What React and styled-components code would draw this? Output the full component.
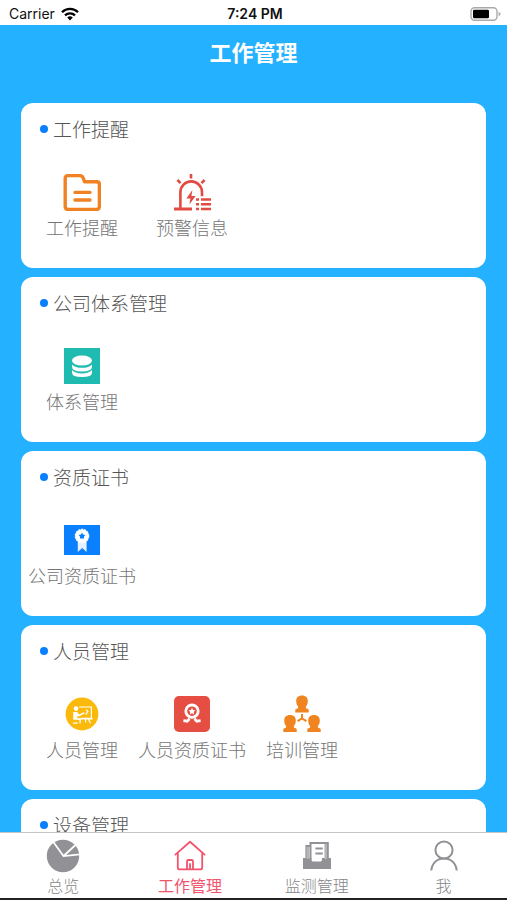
import styled, { createGlobalStyle } from "styled-components";

const GlobalStyle = createGlobalStyle`
  * { box-sizing: border-box; }
  body {
    margin: 0;
    font-family: "Noto Sans CJK SC", "Liberation Sans", sans-serif;
    background: #24b1ff;
  }
`;

const Screen = styled.div`
  height: 100vh;
  display: flex;
  flex-direction: column;
  background: #24b1ff;
`;

const StatusBar = styled.div`
  flex: none;
  height: 25px;
  padding: 2px 6px 0 9px;
  display: grid;
  grid-template-columns: 1fr auto 1fr;
  align-items: center;
  background: #fff;
  color: #111;
  font-family: Inter, sans-serif;
  font-size: 14px;
  line-height: 20px;
`;

const Carrier = styled.div`
  display: flex;
  align-items: center;
  gap: 6px;
`;

const Time = styled.time`
  font-weight: 600;
`;

const Battery = styled.svg`
  justify-self: end;
`;

const Header = styled.header`
  flex: none;
  height: 52px;
  text-align: center;
`;

const Title = styled.h1`
  margin: 0;
  color: #fff;
  font-size: 22px;
  font-weight: 700;
  line-height: 52px;
`;

const Content = styled.main`
  flex: 1;
  min-height: 0;
  overflow: hidden;
  padding: 26px 21px 0;
  display: flex;
  flex-direction: column;
  gap: 9px;
`;

const Card = styled.section`
  flex: none;
  min-height: 165px;
  padding: 12px 6px;
  border-radius: 12px;
  background: #fff;
`;

const CardTitle = styled.h2`
  margin: 0;
  padding-left: 13px;
  display: flex;
  align-items: center;
  gap: 5px;
  color: #555;
  font-size: 19px;
  font-weight: 300;
  line-height: 28px;

  &::before {
    content: "";
    width: 8px;
    height: 8px;
    border-radius: 50%;
    background: #0a80ff;
  }
`;

const Items = styled.div`
  margin-top: 30px;
  display: flex;
`;

const Item = styled.button`
  width: 110px;
  padding: 0;
  border: 0;
  background: none;
  display: flex;
  flex-direction: column;
  align-items: center;
  gap: 3px;
  color: #757575;
  font-family: inherit;
  font-size: 18px;
  font-weight: 300;
  line-height: 26px;
  white-space: nowrap;
  cursor: pointer;
`;

const TabBar = styled.nav`
  flex: none;
  display: flex;
  border-top: 1px solid #c4c4c4;
  border-bottom: 2px solid #222;
  background: #fff;
`;

const Tab = styled.a`
  flex: 1;
  padding: 6px 0 1px;
  display: flex;
  flex-direction: column;
  align-items: center;
  gap: 1px;
  color: ${({ $active }) => ($active ? "#f2536d" : "#858589")};
  font-size: 16px;
  font-weight: ${({ $active }) => ($active ? 400 : 300)};
  line-height: 23px;
  text-decoration: none;
`;

const WifiIcon = () => (
  <svg width="18" height="14" viewBox="0 0 18 14" fill="none" stroke="#000" strokeWidth="2.3" aria-hidden="true">
    <path d="M1 5.2a11.4 11.4 0 0 1 16 0" />
    <path d="M4 8.4a7.2 7.2 0 0 1 10 0" />
    <path d="M6.2 10.6a4 4 0 0 1 5.6 0L9 13.6z" fill="#000" stroke="none" />
  </svg>
);

const BatteryIcon = () => (
  <Battery width="31" height="14" viewBox="0 0 31 14" aria-hidden="true">
    <rect x="1" y="0.8" width="26" height="12.4" rx="3.6" fill="#fff" stroke="#aaa" strokeWidth="1.4" />
    <rect x="3" y="2.7" width="16" height="8.6" rx="1.4" fill="#000" />
    <path d="M28.6 4.8q2 .8 2 2.2t-2 2.2z" fill="#aaa" />
  </Battery>
);

const FolderIcon = () => (
  <svg width="38" height="38" viewBox="0 0 38 38" fill="none" stroke="#f08224" strokeWidth="3.4" strokeLinecap="round" strokeLinejoin="round">
    <path d="M5 2.6h12q2.2 0 3 2l1.6 4.2h12q2.8 0 2.8 2.8v22q0 2.8-2.8 2.8H5q-2.8 0-2.8-2.8V5.4q0-2.8 2.8-2.8z" />
    <path d="M12 19.4h15M12 27h15" />
  </svg>
);

const AlarmIcon = () => (
  <svg width="38" height="38" viewBox="0 0 38 38" fill="none" stroke="#e24b42" strokeWidth="2.6">
    <path d="M7.4 35.5V19.2a10.8 10.8 0 0 1 21.6 0v4" />
    <path d="M1 36h18" strokeWidth="3" />
    <path d="M18 1v4.6M4.4 7l3.2 3.2M31.6 7l-3.2 3.2" />
    <path d="M19.4 17l-6 8.4h4l-1 6 6.2-8.4h-4.2z" fill="#e24b42" stroke="none" />
    <path d="M23 26.5h3M28 26.5h10M23 31.3h3M28 31.3h10M23 36h3M28 36h10" />
  </svg>
);

const DatabaseIcon = () => (
  <svg width="38" height="38" viewBox="0 0 38 38" fill="#fff">
    <path d="M1 1h36v36H1z" fill="#1fbbb0" />
    <ellipse cx="19" cy="13.6" rx="10" ry="5" />
    <path d="M9 17.4q3 3.4 10 3.4t10-3.4v2.4q0 4.8-10 4.8T9 19.8z" />
    <path d="M9 23q3 3.4 10 3.4T29 23v2.4q0 4.6-10 4.6T9 25.4z" />
  </svg>
);

const CertificateIcon = () => (
  <svg width="38" height="38" viewBox="0 0 38 38">
    <path d="M1 4h36v30H1z" fill="#0a80ff" />
    <path d="M14.8 18h8.8v13l-4.4-4-4.4 4z" fill="#e6f1ff" />
    <circle cx="19" cy="15" r="6.6" fill="#fff" stroke="#fff" strokeWidth="1.4" strokeDasharray="2.2 .8" />
    <path d="M19 11.4l1 2.2 2.4.3-1.4 1.7v2h-4v-2l-1.4-1.700 2.400-.3z" fill="#0a80ff" />
  </svg>
);

const StaffIcon = () => (
  <svg width="38" height="38" viewBox="0 0 38 38" fill="none" stroke="#fff" strokeWidth="1.2">
    <circle cx="19" cy="19" r="16.4" fill="#fbb90c" stroke="none" />
    <path d="M16 12h12.4v11.4H18M15 23.8h14.6M25.4 24l2 4.2M22.6 24v3.4" />
    <circle cx="13" cy="13.6" r="2.3" fill="#fff" stroke="none" />
    <path d="M10.2 17h4l2 2.4 5-2.4.6 1.2-5.8 3.4-1.6-.8v2.6h3.4v4.8h-1.4v-3.4h-6.2z" fill="#fff" stroke="none" />
    <path d="M10 28.2h4.6M23 14.6l2 2-2.4 3" />
  </svg>
);

const BadgeIcon = () => (
  <svg width="38" height="38" viewBox="0 0 38 38" fill="none" stroke="#fff">
    <rect x="1" y="1" width="36" height="36" rx="5" fill="#e64d43" stroke="none" />
    <circle cx="19" cy="16.2" r="6.2" strokeWidth="2.8" />
    <path d="M19 12.8l1.1 2.2 2.4.3-1.8 1.7.5 2.4-2.2-1.2-2.2 1.2.5-2.4-1.8-1.7 2.4-.3z" fill="#fff" stroke="none" />
    <path d="M10.4 25.6l3.8.6 2.4-2.4M27.6 25.6l-3.8.6-2.400-2.400" strokeWidth="2.8" />
  </svg>
);

const Person = ({ x, y }) => (
  <path
    transform={`translate(${x} ${y})`}
    d="M6.5 0C10.500 0 12.300 2.400 12.300 5.400C12.300 8 11.600 9.600 10.400 11V12.600L12.600 13.400Q13.200 13.600 13.200 14.600V17H-.2V14.600Q-.2 13.600 .4 13.400L2.600 12.600V11C1.400 9.600 .7 8 .7 5.400C.7 2.400 2.500 0 6.500 0Z"
  />
);

const TrainingIcon = () => (
  <svg width="38" height="38" viewBox="0 0 38 38" fill="#f08420">
    <Person x={12.5} y={0.6} />
    <Person x={0.5} y={20} />
    <Person x={24.5} y={20} />
    <path d="M19 19v5M19 23.4l-4.4 2.8M19 23.4l4.4 2.8" stroke="#f08420" strokeWidth="2" fill="none" />
  </svg>
);

const PieIcon = () => (
  <svg width="34" height="34" viewBox="0 0 34 34">
    <circle cx="17" cy="17" r="16.2" fill="#929296" />
    <path d="M7 2.5L17.5 17 34 15.4M17.5 17L29.5 6" fill="none" stroke="#fff" strokeWidth="1.7" />
  </svg>
);

const HomeIcon = () => (
  <svg width="34" height="34" viewBox="0 0 34 34" fill="none" stroke="#f2536d" strokeWidth="1.8" strokeLinecap="round" strokeLinejoin="round">
    <path d="M2.4 15.6L17 2.8l14.6 12.8" />
    <path d="M4.8 14v14.4q0 2 2 2h20.4q2 0 2-2V14" />
    <path d="M14 30v-7.6q0-1.4 1.4-1.4h3.2q1.4 0 1.4 1.4V30M17 25v5" />
  </svg>
);

const MonitorIcon = () => (
  <svg width="34" height="34" viewBox="0 0 34 34" fill="none" stroke="#929296" strokeWidth="2">
    <path d="M3 19h8.5v2q0 1.4 1.4 1.4h7.6q1.4 0 1.4-1.4v-2H31v11H3z" fill="#929296" stroke="none" />
    <path d="M10.5 20.5V4h17.3v16M6.4 20V7h4" />
    <path d="M15.4 9.6h7.4M15.4 14.6h7.4" />
    <path d="M6.4 8h3v12h-3z" fill="#b4b4b7" stroke="none" />
    <path d="M24.400 5h2.600v15h-2.600z" fill="#b4b4b7" stroke="none" />
  </svg>
);

const UserIcon = () => (
  <svg width="34" height="34" viewBox="0 0 34 34" fill="none" stroke="#929296" strokeWidth="2">
    <circle cx="17" cy="11" r="8.6" />
    <path d="M4.3 31.5C5 24 10 19.6 17 19.6S29 24 29.7 31.5" />
  </svg>
);

const sections = [
  {
    title: "工作提醒",
    items: [
      { label: "工作提醒", Icon: FolderIcon },
      { label: "预警信息", Icon: AlarmIcon },
    ],
  },
  { title: "公司体系管理", items: [{ label: "体系管理", Icon: DatabaseIcon }] },
  { title: "资质证书", items: [{ label: "公司资质证书", Icon: CertificateIcon }] },
  {
    title: "人员管理",
    items: [
      { label: "人员管理", Icon: StaffIcon },
      { label: "人员资质证书", Icon: BadgeIcon },
      { label: "培训管理", Icon: TrainingIcon },
    ],
  },
  { title: "设备管理", items: [] },
];

const tabs = [
  { label: "总览", Icon: PieIcon },
  { label: "工作管理", Icon: HomeIcon, active: true },
  { label: "监测管理", Icon: MonitorIcon },
  { label: "我", Icon: UserIcon },
];

export default function App() {
  return (
    <Screen>
      <GlobalStyle />
      <StatusBar>
        <Carrier>
          Carrier
          <WifiIcon />
        </Carrier>
        <Time>7:24 PM</Time>
        <BatteryIcon />
      </StatusBar>
      <Header>
        <Title>工作管理</Title>
      </Header>
      <Content>
        {sections.map(({ title, items }) => (
          <Card key={title}>
            <CardTitle>{title}</CardTitle>
            <Items>
              {items.map(({ label, Icon }) => (
                <Item key={label} type="button">
                  <Icon />
                  {label}
                </Item>
              ))}
            </Items>
          </Card>
        ))}
      </Content>
      <TabBar>
        {tabs.map(({ label, Icon, active }) => (
          <Tab key={label} href="#" $active={active} aria-current={active ? "page" : undefined}>
            <Icon />
            {label}
          </Tab>
        ))}
      </TabBar>
    </Screen>
  );
}
